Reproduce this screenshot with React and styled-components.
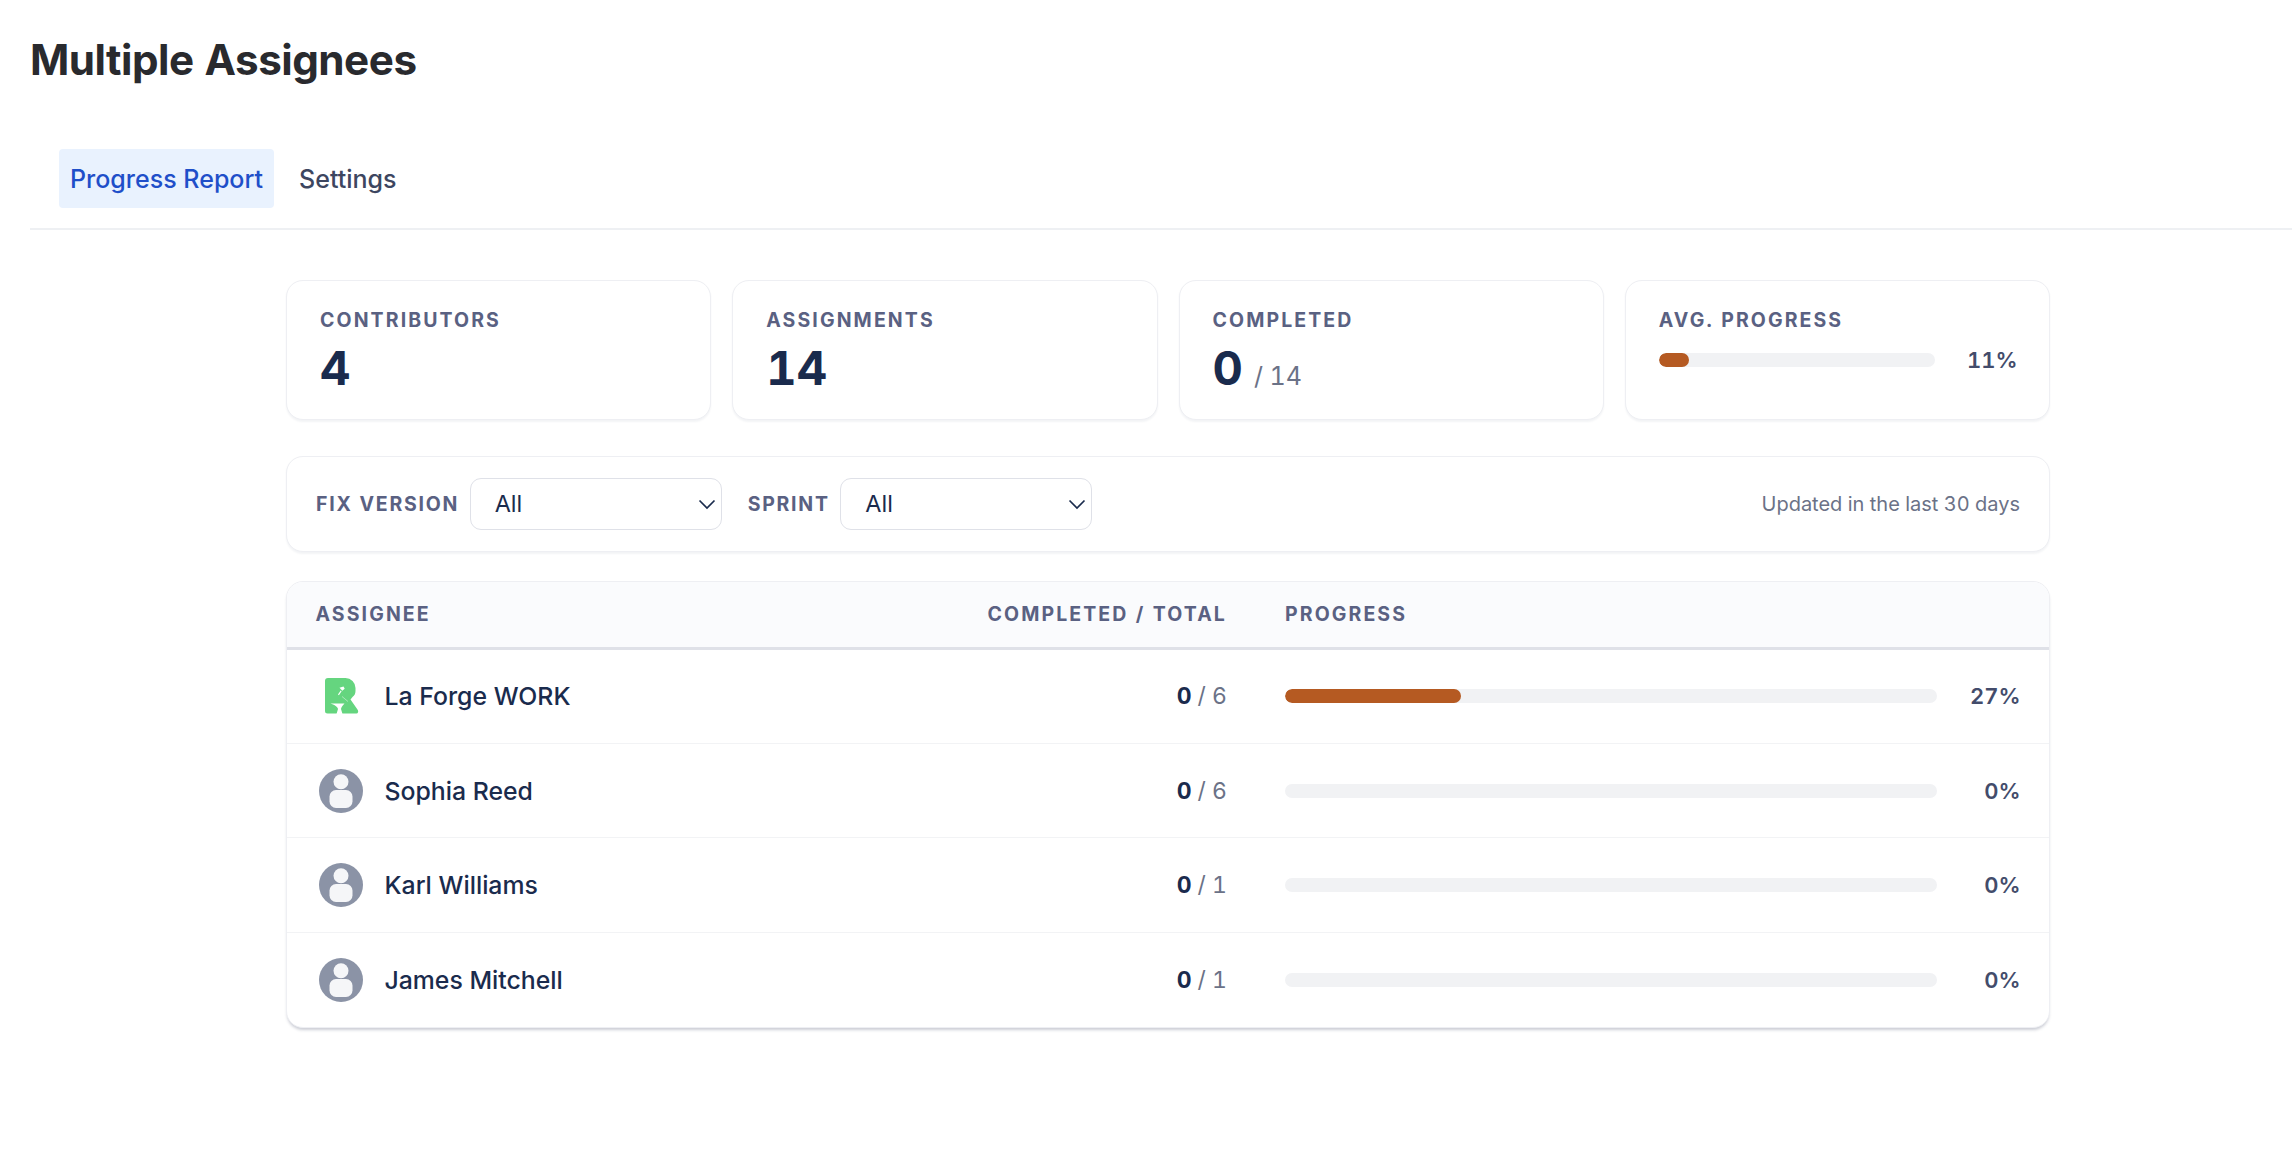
import React from "react";
import styled, { createGlobalStyle } from "styled-components";

const Global = createGlobalStyle`
  html, body { margin: 0; padding: 0; background: #fff; }
  body { font-family: Inter, "Liberation Sans", sans-serif; -webkit-font-smoothing: antialiased; overflow: hidden; font-variant-numeric: tabular-nums; }
  * { box-sizing: border-box; }
`;

const Page = styled.div`
  width: 2292px;
  height: 1152px;
  padding: 30px 0 0 30px;
`;
const Title = styled.h1`
  margin: 0;
  height: 60px;
  font-size: 42.2px;
  line-height: 60px;
  font-weight: 700;
  letter-spacing: -0.5px;
  color: #292a2e;
`;
const Tabs = styled.nav`
  display: flex;
  gap: 14px;
  margin-top: 59px;
  height: 81px;
  padding: 0 0 21px 29px;
  border-bottom: 2px solid #eef0f3;
`;
const Tab = styled.div`
  height: 59px;
  padding: 0 11px;
  border-radius: 4px;
  display: flex;
  align-items: center;
  font-size: 25px;
  font-weight: 500;
  color: ${p => (p.$active ? "#1f4fc9" : "#3d4660")};
  background: ${p => (p.$active ? "#e9f2fe" : "transparent")};
`;
const Main = styled.main`
  width: 1764px;
  margin: 50px 0 0 256px;
  display: flex;
  flex-direction: column;
`;
const Cards = styled.section`
  display: grid;
  grid-template-columns: repeat(4, 1fr);
  gap: 21px;
`;
const Card = styled.div`
  height: 140px;
  padding: 26px 33px 0;
  background: #fff;
  border: 1.5px solid #eeeff3;
  border-radius: 17px;
  box-shadow: 0 1.5px 2px rgba(23, 43, 77, 0.05);
`;
const Caps = styled.div`
  font-size: 19.5px;
  line-height: 26px;
  font-weight: 700;
  letter-spacing: 2.1px;
  text-transform: uppercase;
  color: #5a6182;
`;
const Value = styled.div`
  display: flex;
  align-items: baseline;
  gap: 11px;
  margin-top: 7px;
  font-size: 47px;
  line-height: 56px;
  font-weight: 700;
  color: #1a2b4d;
`;
const ValueSub = styled.span`
  font-size: 25px;
  font-weight: 400;
  color: #6b7287;
`;
const AvgRow = styled.div`
  display: flex;
  align-items: center;
  margin: 14px -1.5px 0 0;
  gap: 32px;
`;
const Track = styled.div`
  flex: 1;
  height: 14px;
  border-radius: 7px;
  background: #f1f2f4;
  overflow: hidden;
`;
const Fill = styled.div`
  height: 100%;
  border-radius: 7px;
  background: #b55a22;
`;
const Pct = styled.div`
  font-size: 22px;
  font-weight: 600;
  color: #434c6b;
  text-align: right;
`;
const FilterBar = styled.section`
  margin-top: 36px;
  height: 96px;
  padding: 0 29px;
  display: flex;
  align-items: center;
  background: #fff;
  border: 1.5px solid #eeeff3;
  border-radius: 17px;
  box-shadow: 0 1.5px 2px rgba(23, 43, 77, 0.05);
`;
const FilterLabel = styled(Caps)`
  margin-right: 10.5px;
  letter-spacing: 1.75px;
`;
const SelectWrap = styled.div`
  position: relative;
  width: 252px;
  height: 52px;
  margin-right: 26px;
`;
const Select = styled.select`
  appearance: none;
  width: 100%;
  height: 100%;
  padding: 0 24px;
  background: #fff;
  border: 1.5px solid #dfe1e8;
  border-radius: 11px;
  font-family: inherit;
  font-size: 23.5px;
  font-weight: 400;
  line-height: 48px;
  color: #1a2b4d;
`;
const Chevron = styled.svg`
  position: absolute;
  right: 6px;
  top: 18px;
  width: 18px;
  height: 16px;
  pointer-events: none;
`;
const Note = styled.div`
  margin-left: auto;
  font-size: 20px;
  color: #6b7287;
`;
const Table = styled.section`
  margin-top: 29px;
  background: #fff;
  border: 1.5px solid #eeeff3;
  border-radius: 17px;
  overflow: hidden;
  box-shadow: 0 3px 3px -1px rgba(50, 60, 90, 0.25);
`;
const Grid = styled.div`
  display: grid;
  grid-template-columns: 1fr 735.5px;
  column-gap: 58px;
  align-items: center;
  padding: 0 28.5px;
`;
const Head = styled(Grid)`
  height: 67.5px;
  background: #fafbfd;
  border-bottom: 3px solid #dfe1e8;
`;
const HeadCells = styled.div`
  display: flex;
  justify-content: space-between;
  align-items: center;
`;
const Row = styled(Grid)`
  height: 94.4px;
  border-bottom: 1.5px solid #f2f3f5;
  &:last-child { border-bottom: none; height: 94px; }
`;
const RowLeft = styled.div`
  display: flex;
  justify-content: space-between;
  align-items: center;
`;
const Person = styled.div`
  display: flex;
  align-items: center;
  gap: 22px;
  font-size: 24.8px;
  font-weight: 500;
  color: #1a2b4d;
`;
const Mark = styled.svg`
  width: 44px;
  height: 44px;
  margin-left: 3px;
  flex: none;
`;
const Count = styled.div`
  font-size: 23px;
  color: #6b7287;
  display: flex;
  gap: 6px;
`;
const Strong = styled.b`
  font-weight: 700;
  color: #1a2b4d;
`;
const Bar = styled.div`
  display: grid;
  grid-template-columns: 652px 1fr;
  align-items: center;
`;

const Avatar = () => (
  <Mark viewBox="0 0 44 44">
    <circle cx="22" cy="22" r="22" fill="#8b93a6" />
    <circle cx="22" cy="12.8" r="7.500" fill="#f5f6f8" />
    <rect x="10.500" y="21" width="23" height="18" rx="6.500" fill="#f5f6f8" />
  </Mark>
);
const Logo = () => (
  <Mark viewBox="0 0 44 44">
    <path
      d="M6 7a3 3 0 0 1 3-3h17.500a10 10 0 0 1 10 10v3c0 2.500-1 4.500-3 6l-2 2.500 7.300 10.500c.9 1.500.2 3.500-1.300 3.500H8.500A2.500 2.500 0 0 1 6 37z"
      fill="#65d57f"
    />
    <path d="M11.500 29.500h14c-1.500 1.500-3 3-3.500 5.500l1.500 5h-6l1.500-5c-.5-2.500-4-4.500-7.500-5.500z" fill="#fff" />
    <path d="M19 20.500l2.700-4 .9.700-2.700 4z" fill="#fff" />
    <path d="M20.500 13.800l4-1.200 1.200 2.100-2.400 2z" fill="#fff" />
    <path d="M23 22.500l6 5" stroke="#a9e8b9" strokeWidth="1" fill="none" />
  </Mark>
);

const people = [
  { name: "La Forge WORK", done: 0, total: 6, pct: 27, logo: true },
  { name: "Sophia Reed", done: 0, total: 6, pct: 0 },
  { name: "Karl Williams", done: 0, total: 1, pct: 0 },
  { name: "James Mitchell", done: 0, total: 1, pct: 0 },
];

const Arrow = () => (
  <Chevron viewBox="0 0 18 16">
    <path d="M1.500 4.500 9 12l7.500-7.500" fill="none" stroke="#1a2b4d" strokeWidth="1.700" />
  </Chevron>
);

export default function App() {
  return (
    <Page>
      <Global />
      <Title>Multiple Assignees</Title>
      <Tabs>
        <Tab $active>Progress Report</Tab>
        <Tab>Settings</Tab>
      </Tabs>
      <Main>
        <Cards>
          <Card><Caps>Contributors</Caps><Value>4</Value></Card>
          <Card><Caps>Assignments</Caps><Value>14</Value></Card>
          <Card><Caps>Completed</Caps><Value>0<ValueSub>/ 14</ValueSub></Value></Card>
          <Card>
            <Caps>Avg. Progress</Caps>
            <AvgRow>
              <Track><Fill style={{ width: "11%" }} /></Track>
              <Pct>11%</Pct>
            </AvgRow>
          </Card>
        </Cards>
        <FilterBar>
          <FilterLabel>Fix Version</FilterLabel>
          <SelectWrap><Select defaultValue="All"><option>All</option></Select><Arrow /></SelectWrap>
          <FilterLabel>Sprint</FilterLabel>
          <SelectWrap><Select defaultValue="All"><option>All</option></Select><Arrow /></SelectWrap>
          <Note>Updated in the last 30 days</Note>
        </FilterBar>
        <Table>
          <Head>
            <HeadCells><Caps>Assignee</Caps><Caps>Completed / Total</Caps></HeadCells>
            <Caps>Progress</Caps>
          </Head>
          {people.map(p => (
            <Row key={p.name}>
              <RowLeft>
                <Person>{p.logo ? <Logo /> : <Avatar />}{p.name}</Person>
                <Count><Strong>{p.done}</Strong>/ {p.total}</Count>
              </RowLeft>
              <Bar>
                <Track><Fill style={{ width: `${p.pct}%` }} /></Track>
                <Pct>{p.pct}%</Pct>
              </Bar>
            </Row>
          ))}
        </Table>
      </Main>
    </Page>
  );
}
